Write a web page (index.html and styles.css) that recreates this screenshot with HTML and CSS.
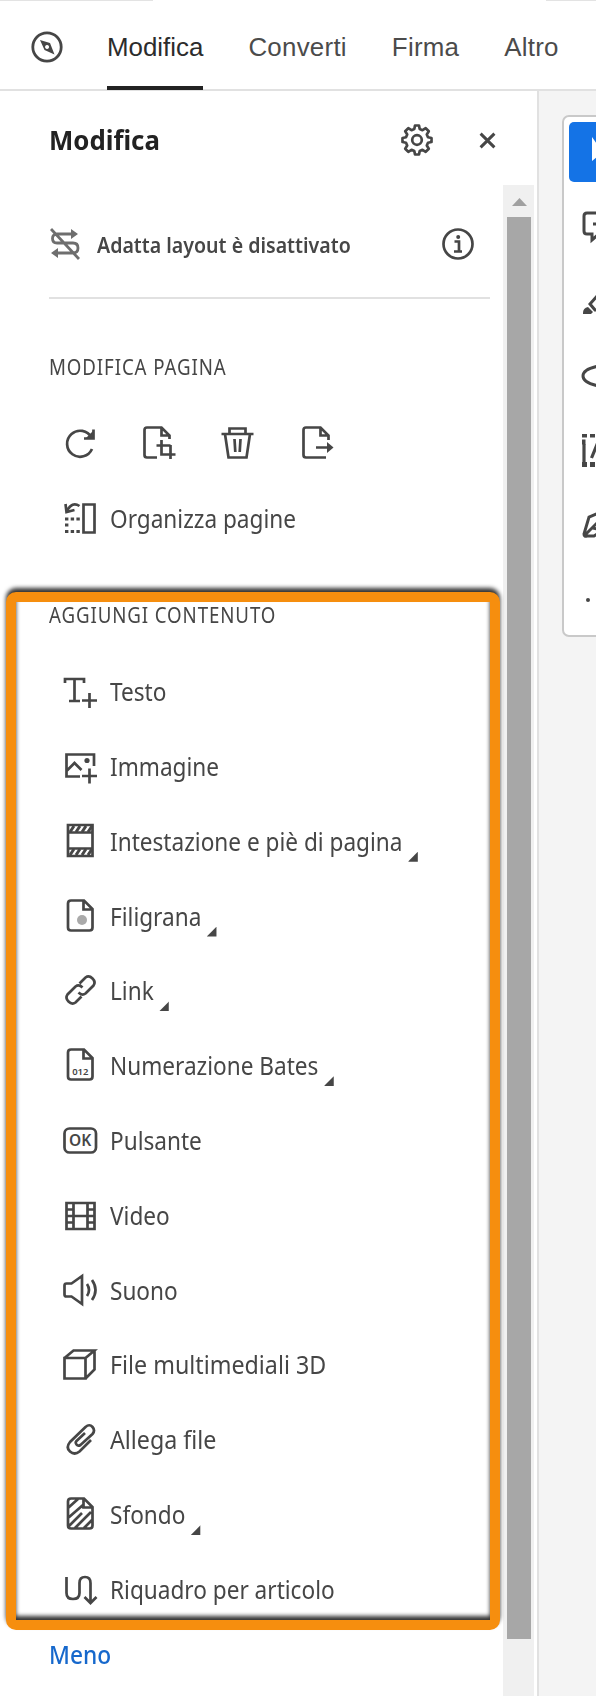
FILE: index.html
```html
<!DOCTYPE html>
<html lang="it">
<head>
    <meta charset="UTF-8">
    <meta name="viewport" content="width=device-width, initial-scale=1.0">
    <title>Modifica</title>
    <link rel="stylesheet" href="styles.css">
</head>
<body>
    <header class="topbar">
        <svg class="compass" viewBox="0 0 32 32">
            <circle cx="16" cy="16" r="14.2"/>
            <path class="solid" fill-rule="evenodd" d="M9 9l10 3 4.500 11.500-10-4.500zM16 14a2 2 0 1 0 .1 0z"/>
        </svg>
        <nav class="tabs">
            <a class="tab active">Modifica</a>
            <a class="tab">Converti</a>
            <a class="tab">Firma</a>
            <a class="tab">Altro</a>
        </nav>
        <div class="edge edge-left"></div>
        <div class="edge edge-right"></div>
    </header>
    <main class="content">
        <section class="panel">
            <div class="panel-header">
                <h1>Modifica</h1>
                <svg class="gear" viewBox="0 0 32 32">
                    <path d="M13.300 5L14 1.500h4L18.700 5 21.500 6.200 24.700 4.200 27.800 7.300 25.800 10.500 27 13.300 30.500 14v4L27 18.700 25.800 21.500 27.800 24.700 24.700 27.800 21.500 25.800 18.700 27 18 30.500h-4L13.300 27 10.500 25.800 7.300 27.800 4.200 24.700 6.200 21.500 5 18.700 1.500 18v-4L5 13.300 6.200 10.500 4.200 7.300 7.300 4.200 10.500 6.200Z" stroke-linejoin="round"/>
                    <circle cx="16" cy="16" r="4.800"/>
                </svg>
                <svg class="close" viewBox="0 0 16 16"><path d="M1.500 1.500l13 13M14.500 1.500l-13 13"/></svg>
            </div>
            <div class="panel-body">
                <div class="panel-content">
                    <div class="reflow">
                        <svg class="reflow-icon" viewBox="0 0 30 32">
                            <path d="M25 6H7q-4.500 0-4.500 4.500T7 15h16q5 0 5 5t-5 5H5M1 1l28 30"/>
                            <path class="solid" d="M21 1l7 5-7 5zM8 20l-7 5 7 5z"/>
                        </svg>
                        <span class="reflow-text">Adatta layout è disattivato</span>
                        <svg class="info" viewBox="0 0 32 32">
                            <circle cx="16" cy="16" r="14.500"/>
                            <path d="M12.500 13.500H17v9.500M12 23.500h8"/>
                            <circle class="solid" cx="16.200" cy="9" r="2"/>
                        </svg>
                    </div>
                    <h2 class="title-edit">MODIFICA PAGINA</h2>
                    <div class="page-actions">
                        <svg viewBox="0 0 36 36"><path d="M29.500 12.500A13 13 0 1 0 30 24M31.500 4.500v9H22"/><path class="solid" d="M32 5v9h-9z"/></svg>
                        <svg viewBox="0 0 36 36"><path d="M16 32.500H6q-2.500 0-2.500-2.500V5q0-2.500 2.500-2.500h14.500l8 8V14M20.500 2.500v8h8M15.500 20.500h14M20.500 15v14.500h14M29.500 20v14"/></svg>
                        <svg viewBox="0 0 36 36"><path d="M1.500 9h32M9.500 8V3.500h16V8M5 9l3.500 23.500h18L30 9M14.500 14l.8 13M20.500 14l-.8 13"/></svg>
                        <svg viewBox="0 0 36 36"><path d="M27 32.500H7q-2.500 0-2.500-2.500V5q0-2.500 2.500-2.500h14.500l8 8V15M21.500 2.500v8h8M17 22.500h12"/><path class="solid" d="M28 17l6.500 5.500L28 28z"/></svg>
                    </div>
                    <div class="tool organize">
                        <svg viewBox="0 0 36 36"><path d="M21.500 4.500h11v28h-11zM5 11Q10 1 17.500 6M3.500 4l1 8 8-2"/><path d="M3 19h15M3 25h4M3 31.500h15" stroke-width="3.200" stroke-dasharray="3.400 2.300"/></svg>
                        <span class="label">Organizza pagine</span>
                    </div>
                    <h2 class="title-add">AGGIUNGI CONTENUTO</h2>
                    <div class="tools">
                        <div class="tool">
                            <svg viewBox="0 0 36 36"><path d="M3 10V6h19v4M12.500 6v22M7 28h11M20 27.500h15M27.500 20v15"/></svg>
                            <span class="label">Testo</span>
                        </div>
                        <div class="tool">
                            <svg viewBox="0 0 36 36"><path d="M18 28.500H4.500v-22H32V18M4.500 23l8-8 7 7M20 28h15M27.500 20.500v15"/><circle class="solid" cx="25" cy="12.500" r="2.600"/></svg>
                            <span class="label">Immagine</span>
                        </div>
                        <div class="tool">
                            <svg viewBox="0 0 36 36"><path d="M6 2h24.500v31H6zM6 9.500h24.500M6 25.500h24.500"/><path d="M8 9l4-6M14 9l4-6M20 9l4-6M26 9l4-6M8 32l4-6M14 32l4-6M20 32l4-6M26 32l4-6" stroke-width="3"/></svg>
                            <span class="label">Intestazione e piè di pagina<i class="more"></i></span>
                        </div>
                        <div class="tool">
                            <svg viewBox="0 0 36 36"><path d="M9 2.500h13l8.500 8.500v18.500q0 3-3 3H9q-3 0-3-3v-24q0-3 3-3zM21.500 2.500v9h9"/><circle class="dot" cx="20" cy="22" r="5"/></svg>
                            <span class="label">Filigrana<i class="more"></i></span>
                        </div>
                        <div class="tool">
                            <svg viewBox="0 0 36 36"><path d="M17.500 11.500l6-6q3.500-2.500 7 1t1 7l-8 8q-3.500 2.500-7-1M19.500 24.500l-6 6q-3.500 2.500-7-1t-1-7l8-8q3.500-2.500 7 1"/></svg>
                            <span class="label">Link<i class="more"></i></span>
                        </div>
                        <div class="tool">
                            <svg viewBox="0 0 36 36"><path d="M9 2.500h13l8.500 8.500v18.500q0 3-3 3H9q-3 0-3-3v-24q0-3 3-3zM21.500 2.500v9h9"/><text class="num" x="18.300" y="28">012</text></svg>
                            <span class="label">Numerazione Bates<i class="more"></i></span>
                        </div>
                        <div class="tool">
                            <svg viewBox="0 0 36 36"><rect x="2.500" y="6.500" width="31.500" height="24" rx="5"/><text class="ok" x="18.200" y="24">OK</text></svg>
                            <span class="label">Pulsante</span>
                        </div>
                        <div class="tool">
                            <svg viewBox="0 0 36 36"><path d="M4.500 6v26h28V6zM11.500 6v26M25.500 6v26M11.500 19h14M4.500 12.500h7M4.500 19h7M4.500 25.500h7M25.500 12.500h7M25.500 19h7M25.500 25.500h7M3.200 6h30.600"/></svg>
                            <span class="label">Video</span>
                        </div>
                        <div class="tool">
                            <svg viewBox="0 0 36 36"><path d="M2.500 13.500q0-2 2-2h5L20 4v28L9.500 24.500h-5q-2 0-2-2zM25 12q4 6 0 12M30 8q7 10 0 20"/></svg>
                            <span class="label">Suono</span>
                        </div>
                        <div class="tool">
                            <svg viewBox="0 0 36 36"><path d="M2.500 12h21v20.500h-21zM2.500 12l9-7.500H32.500l-9 7.500M32.500 4.500v19l-9 9"/></svg>
                            <span class="label wide">File multimediali 3D</span>
                        </div>
                        <div class="tool">
                            <svg viewBox="0 0 36 36"><path d="M29 19L17.500 30.500q-5 4-9.500 0t0-9.500L23.500 6q4-3.500 7 0t0 7L18.500 24q-2.500 1.500-4-.500t0-3.500l8.500-8"/></svg>
                            <span class="label wide">Allega file</span>
                        </div>
                        <div class="tool">
                            <svg viewBox="0 0 36 36"><path d="M9 2.500h13l8.500 8.500v18.500q0 3-3 3H9q-3 0-3-3v-24q0-3 3-3zM21.500 2.500v9h9M6 12L16 3M6 22L21 9M7 30l13-13M13 32l16-16M22 32l8-8"/></svg>
                            <span class="label">Sfondo<i class="more"></i></span>
                        </div>
                        <div class="tool">
                            <svg viewBox="0 0 36 36"><path d="M4.500 6v16q0 6 6.500 6t6.500-6V12q0-6 5.500-6t5.500 6v19M22.500 26l6 6 6-6"/></svg>
                            <span class="label">Riquadro per articolo</span>
                        </div>
                    </div>
                    <a class="less">Meno</a>
                </div>
                <div class="scrollbar">
                    <div class="scroll-up"></div>
                    <div class="scroll-thumb"></div>
                </div>
            </div>
            <div class="highlight"></div>
        </section>
        <aside class="workspace">
            <div class="toolbar">
                <div class="select-tool">
                    <svg viewBox="0 0 30 60"><path d="M23 15v24l6-5 8 1z"/></svg>
                </div>
                <svg class="tb" viewBox="0 0 30 40"><path d="M30 6H18q-3 0-3 3v15q0 3 3 3h5v6l7-6M24 17h6"/></svg>
                <svg class="tb" viewBox="0 0 30 40"><path d="M30 12l-9 10 5 6h4"/><path class="solid" d="M14 31q0-5 5-6l5 5-2 2h-8z"/></svg>
                <svg class="tb" viewBox="0 0 30 40"><path d="M30 10Q14 13 14 20T30 30"/></svg>
                <svg class="tb" viewBox="0 0 30 40"><path d="M15 13v20M22.500 27l7-17" stroke-width="3.200"/><path class="solid" d="M13 3h5v3.500h-5zM21 3h5v3.500h-5zM13 8.500h3.500v5H13zM13 31h5v5h-5zM21 31h5v5h-5zM28 3h2v3.500h-2zM28 31h2v5h-2z"/></svg>
                <svg class="tb" viewBox="0 0 30 40"><path d="M30 8L20 12l-5 17q0 3 3 2h7l5-3M16 30l14-14M24 23l4 1"/></svg>
                <svg class="tb" viewBox="0 0 30 40"><circle class="solid" cx="19" cy="20" r="2"/><circle class="solid" cx="30.500" cy="20" r="2"/></svg>
            </div>
        </aside>
    </main>
</body>
</html>
```
FILE: styles.css
```css
* {
    box-sizing: border-box;
}
body {
    margin: 0;
    width: 596px;
    height: 1696px;
    overflow: hidden;
    background-color: #fff;
    color: #464646;
    font-family: "Noto Sans", "Open Sans", sans-serif;
}
svg {
    display: block;
    flex: none;
    fill: none;
    stroke: #464646;
    stroke-width: 2.7;
}
.solid {
    fill: #464646;
    stroke: none;
}
.topbar {
    position: relative;
    display: flex;
    height: 91px;
    padding-left: 31px;
    border-bottom: 2px solid #e1e1e1;
}
.compass {
    width: 32px;
    height: 32px;
    margin-top: 31px;
    stroke-width: 2.8;
}
.tabs {
    display: flex;
    gap: 45px;
    margin-left: 44px;
    font-family: "Liberation Sans", Arial, sans-serif;
    font-size: 25.9px;
    color: #4b4b4b;
}
.tab {
    height: 90px;
    line-height: 94px;
    letter-spacing: 0.25px;
}
.tab.active {
    letter-spacing: 0;
    color: #2c2c2c;
    border-bottom: 4px solid #222;
}
.edge {
    position: absolute;
    top: 0;
    height: 1px;
    background-color: #e3e3e3;
}
.edge-left {
    left: 0;
    width: 153px;
}
.edge-right {
    right: 0;
    width: 50px;
}
.content {
    display: flex;
    height: 1605px;
}
.panel {
    position: relative;
    width: 539px;
    border-right: 2px solid #e1e1e1;
}
.panel-header {
    display: flex;
    align-items: center;
    height: 94px;
    padding: 4px 41px 0 49px;
}
h1 {
    flex: 1;
    margin: 0;
    font-size: 27px;
    font-weight: 700;
    line-height: 38px;
    color: #222;
    transform: scaleX(0.955);
    transform-origin: left;
}
.gear {
    width: 32px;
    height: 32px;
    margin-right: 46px;
}
.close {
    width: 17px;
    height: 17px;
    stroke-width: 2.8;
}
.panel-body {
    display: flex;
    height: 1511px;
}
.panel-content {
    width: 503px;
    padding-left: 49px;
}
.reflow {
    display: flex;
    align-items: center;
    width: 441px;
    height: 114px;
    padding: 6px 16px 0 1px;
    border-bottom: 2px solid #e1e1e1;
}
.reflow-icon {
    width: 30px;
    height: 32px;
    stroke: #6e6e6e;
    stroke-width: 2.8;
}
.reflow-icon .solid {
    fill: #6e6e6e;
}
.reflow-text {
    flex: 1;
    margin-left: 17px;
    font-size: 22px;
    font-weight: 600;
    white-space: nowrap;
    transform: scaleX(0.89);
    transform-origin: left;
}
.info {
    width: 32px;
    height: 32px;
}
h2 {
    margin: 0;
    font-size: 21px;
    font-weight: 400;
    letter-spacing: 1px;
    line-height: 30px;
    white-space: nowrap;
    transform: scaleX(0.89);
    transform-origin: left;
}
.title-edit {
    margin-top: 53px;
}
.page-actions {
    display: flex;
    gap: 43px;
    margin: 43px 0 0 13px;
}
.page-actions svg {
    width: 36px;
    height: 36px;
}
.tool {
    display: flex;
    align-items: center;
    height: 74.8px;
    padding-left: 13px;
    font-size: 25px;
    white-space: nowrap;
}
.tool svg {
    width: 36px;
    height: 36px;
    margin-right: 12px;
}
/* slightly condensed labels */
.label {
    display: flex;
    align-items: center;
    transform: scaleX(0.904);
    transform-origin: left;
}
.label.wide {
    transform: scaleX(0.93);
}
.organize {
    margin-top: 20px;
}
.title-add {
    margin-top: 44px;
}
.tools {
    margin-top: 24px;
}
.more {
    width: 11px;
    height: 10px;
    margin: 32px 0 0 6px;
    background-color: #464646;
    clip-path: polygon(100% 0, 100% 100%, 0 100%);
}
.dot {
    fill: #aaa;
    stroke: none;
}
.num, .ok {
    fill: #464646;
    stroke: none;
    text-anchor: middle;
    font-size: 9.5px;
    font-weight: 600;
}
.ok {
    font-size: 15.5px;
}
.less {
    display: block;
    width: 100px;
    margin-top: 10px;
    font-size: 25px;
    font-weight: 500;
    line-height: 36px;
    color: #1668cc;
    transform: scaleX(0.91);
    transform-origin: left;
}
.scrollbar {
    width: 31px;
    background-color: #f0f0f0;
}
.scroll-up {
    width: 15px;
    height: 8px;
    margin: 13px 0 11px 9px;
    background-color: #a0a0a0;
    clip-path: polygon(50% 0, 100% 100%, 0 100%);
}
.scroll-thumb {
    width: 24px;
    height: 1422px;
    margin-left: 4px;
    background-color: #a7a7a7;
}
/* callout frame laid over the section */
.highlight {
    position: absolute;
    left: 6px;
    top: 501px;
    width: 494px;
    height: 1038px;
    border: 10px solid #f68e0e;
    border-radius: 10px;
    filter: drop-shadow(0 -4px 2px rgba(0, 0, 0, 0.8));
}
.workspace {
    flex: 1;
    padding: 24px 0 0 23px;
    background-color: #f4f4f4;
    overflow: hidden;
}
.toolbar {
    width: 60px;
    height: 522px;
    padding: 5px 0 0 5px;
    border: 2px solid #c9c9c9;
    border-radius: 7px;
    background-color: #fff;
}
.select-tool {
    width: 60px;
    height: 60px;
    border-radius: 5px;
    background-color: #1473e6;
}
.select-tool svg {
    width: 30px;
    height: 60px;
    fill: #fff;
    stroke: none;
}
.tb {
    width: 30px;
    height: 40px;
    margin-bottom: 34.5px;
    stroke-width: 3;
}
.select-tool + .tb {
    margin-top: 25px;
}
```
